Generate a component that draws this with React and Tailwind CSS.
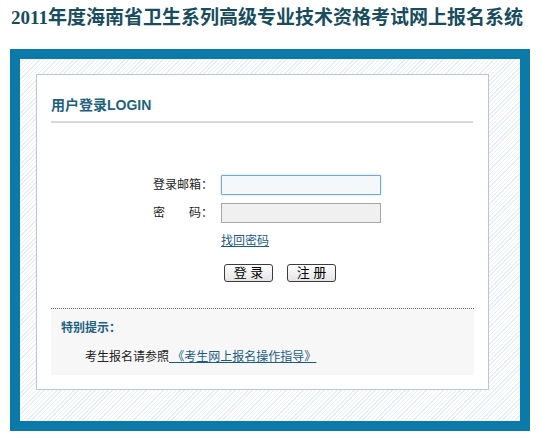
export default function App() {
  const cjk = '"Liberation Sans", "Noto Sans CJK SC", sans-serif';

  return (
    <div className="w-[541px] h-[437px] bg-white" style={{ fontFamily: cjk }}>
      {/* title */}
      <div className="h-[49px] pt-[6px] flex justify-center pr-[7px]">
        <h1
          className="text-[19px] leading-6 font-bold text-[#174d5e]"
          style={{ fontFamily: '"Liberation Serif", "Noto Sans CJK SC", serif' }}
        >
          2011年度海南省卫生系列高级专业技术资格考试网上报名系统
        </h1>
      </div>

      {/* blue frame */}
      <div className="ml-[10px] w-[520px] h-[382px] border-[10px] border-[#0c7aa9]">
        <div className="h-full pl-[16px] pt-[15px] bg-[repeating-linear-gradient(135deg,#ffffff_0px,#ffffff_2px,#e6eff5_2px,#e6eff5_3px)]">
          <div className="w-[453px] h-[316px] border border-[#b5c8d4] bg-white px-[14px]">
            {/* heading */}
            <div className="mt-[22px] pb-[8px] border-b-2 border-[#d9d9d9] mr-[1px]">
              <span className="block text-[14px] leading-4 font-bold text-[#1d6180]">用户登录LOGIN</span>
            </div>

            {/* form */}
            <div className="ml-[102px] mt-[52px] text-[12px] text-[#222]">
              <div className="flex items-center h-[20px]">
                <span className="w-[60px]">登录邮箱：</span>
                <input
                  className="ml-[8px] w-[160px] h-[20px] border border-[#79a8cf] bg-[#f5f8fb] rounded-[1px] shadow-[0_0_2px_#9cc3e3] outline-none"
                  defaultValue=""
                />
              </div>
              <div className="flex items-center h-[20px] mt-[8px]">
                <span className="w-[60px] flex justify-between">
                  <span>密</span>
                  <span>码：</span>
                </span>
                <input
                  type="password"
                  className="ml-[8px] w-[160px] h-[20px] border border-[#a6a6a6] bg-[#f0f0f0] outline-none"
                  defaultValue=""
                />
              </div>
              <div className="ml-[68px] mt-[11px] leading-[14px]">
                <a href="#" className="text-[#1b5b8a] underline">找回密码</a>
              </div>
              <div className="ml-[71px] mt-[16px] flex gap-[14px]">
                <button className="w-[49px] h-[18px] border border-[#3c3c3c] rounded-[3px] bg-[linear-gradient(#ffffff,#e4e4e4)] text-[13px] leading-4 text-black">
                  登 录
                </button>
                <button className="w-[49px] h-[18px] border border-[#3c3c3c] rounded-[3px] bg-[linear-gradient(#ffffff,#e4e4e4)] text-[13px] leading-4 text-black">
                  注 册
                </button>
              </div>
            </div>

            {/* notice */}
            <div className="mt-[26px] border-t border-dotted border-[#666] bg-[#f7f7f7] h-[67px] pt-[11px] pl-[10px] text-[12px]">
              <p className="leading-4 font-bold text-[#1d6180]">特别提示：</p>
              <p className="leading-4 mt-[13px] pl-[24px] text-[#222]">
                考生报名请参照
                <a href="#" className="text-[#1b5b8a] underline"> 《考生网上报名操作指导》 </a>
              </p>
            </div>
          </div>
        </div>
      </div>
    </div>
  );
}
